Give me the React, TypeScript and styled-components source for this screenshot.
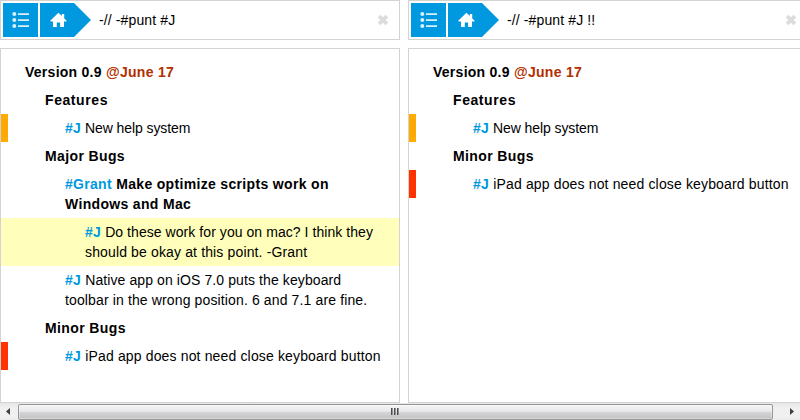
import React from "react";
import styled, { createGlobalStyle } from "styled-components";

const GlobalStyle = createGlobalStyle`
  html, body { margin: 0; padding: 0; overflow: hidden; background: #fff; }
  * { box-sizing: border-box; }
  body { font-family: "Liberation Sans", Arial, sans-serif; font-size: 14px; line-height: 20px; color: #000; }
`;

const Page = styled.div`
  display: flex;
  flex-direction: column;
  width: 800px;
  height: 420px;
  overflow: hidden;
`;

const Panes = styled.main`
  display: flex;
  gap: 8px;
  height: 403px;
  overflow: hidden;
`;

const Pane = styled.section`
  display: flex;
  flex-direction: column;
  flex: none;
  gap: 8px;
  width: 400px;
`;

const SearchBar = styled.header`
  display: flex;
  align-items: center;
  height: 40px;
  padding: 0 10px 0 2px;
  border: 1px solid #d3d3d3;
`;

const MenuButton = styled.button`
  display: flex;
  width: 35px;
  height: 34px;
  margin: 0 2px 0 0;
  padding: 0;
  border: 0;
  background: #0099e0;
`;

const HomeButton = styled(MenuButton)`
  width: 51px;
  margin-right: 8px;
  clip-path: polygon(0 0, 34px 0, 51px 50%, 34px 100%, 0 100%);
`;

const Query = styled.div`
  flex: 1;
  white-space: pre;
  letter-spacing: 0.12px;
`;

const Outline = styled.div`
  height: 355px;
  padding-top: 9px;
  border: 1px solid #d3d3d3;
`;

const Row = styled.div<{ $level: number; $bold?: boolean; $fill?: string; $mark?: string }>`
  padding: 4px 8px 4px ${(p) => 4 + p.$level * 20 - (p.$mark ? 7 : 0)}px;
  border-left: ${(p) => (p.$mark ? `7px solid ${p.$mark}` : "0")};
  background: ${(p) => p.$fill ?? "transparent"};
  font-weight: ${(p) => (p.$bold ? 700 : 400)};
  white-space: nowrap;
`;

const Text = styled.span<{ $track: number }>`
  letter-spacing: ${(p) => p.$track}px;
`;

const Tag = styled.span`
  color: #0099e0;
  font-weight: 700;
  letter-spacing: 0.3px;
`;

const DateTag = styled.span`
  color: #b23000;
  letter-spacing: 0.3px;
`;

const ScrollBar = styled.div`
  display: flex;
  align-items: center;
  width: 800px;
  height: 17px;
  background: linear-gradient(#e6e6e6, #f0f0f0 30%, #f0f0f0 85%, #e8e8e8);
`;

const ScrollEnd = styled.div<{ $width: number }>`
  display: flex;
  width: ${(p) => p.$width}px;
  height: 17px;
`;

const Thumb = styled.div`
  display: flex;
  align-items: center;
  justify-content: center;
  gap: 1px;
  width: 755px;
  height: 16px;
  margin-top: 1px;
  padding: 0 2px 1px 0;
  border: 1px solid #979797;
  border-radius: 2px;
  background: linear-gradient(#f5f5f5 0, #e9e9eb 45%, #d6d6d8 50%, #c0c0c4 100%);
  box-shadow: inset 0 0 0 1px rgba(255, 255, 255, 0.35);
`;

const Grip = styled.span`
  width: 2px;
  height: 7px;
  background: linear-gradient(90deg, #4c4c4c 50%, #929292 50%);
`;

const ListIcon = () => (
  <svg width="35" height="34" fill="#d9f0fb">
    <circle cx="11.3" cy="11" r="2" />
    <circle cx="11.3" cy="17" r="2" />
    <circle cx="11.3" cy="23" r="2" />
    <path d="M15 10.2h11v1.7H15zM15 16.2h11v1.7H15zM15 22.2h11v1.7H15z" />
  </svg>
);

const HomeIcon = () => (
  <svg width="51" height="34" fill="#fff">
    <path d="M18.4 9.8L21.8 13V11h2.4v4.4l2.5 2.4-.5.8H24v4.9q0 .6-.6.6h-3.3v-4.6h-3.3v4.6h-3.2q-.6 0-.6-.6v-4.9h-2.3l-.5-.8z" />
  </svg>
);

const CloseIcon = () => (
  <svg width="12" height="12" stroke="#dcdcdc" strokeWidth="3.8" strokeLinecap="square">
    <path d="M3.4 3.4l5.2 5.2M8.6 3.4L3.4 8.6" />
  </svg>
);

const Search = ({ children }: { children: React.ReactNode }) => (
  <SearchBar>
    <MenuButton aria-label="Documents"><ListIcon /></MenuButton>
    <HomeButton aria-label="Home"><HomeIcon /></HomeButton>
    <Query>{children}</Query>
    <CloseIcon />
  </SearchBar>
);

const Version = () => (
  <Row $level={1} $bold><Text $track={0.26}>Version 0.9 </Text><DateTag>@June 17</DateTag></Row>
);

const Heading = ({ track = 0.38, children }: { track?: number; children: string }) => (
  <Row $level={2} $bold><Text $track={track}>{children}</Text></Row>
);

const HelpItem = () => (
  <Row $level={3} $mark="#ffaa00"><Tag>#J</Tag><Text $track={-0.08}> New help system</Text></Row>
);

const KeyboardItem = () => (
  <Row $level={3} $mark="#ff3300"><Tag>#J</Tag><Text $track={0.15}> iPad app does not need close keyboard button</Text></Row>
);

export default function App() {
  return (
    <>
      <GlobalStyle />
      <Page>
        <Panes>
          <Pane>
            <Search>-// -#punt #J</Search>
            <Outline>
              <Version />
              <Heading track={0.58}>Features</Heading>
              <HelpItem />
              <Heading>Major Bugs</Heading>
              <Row $level={3} $bold>
                <Tag>#Grant</Tag><Text $track={0.33}> Make optimize scripts work on<br />Windows and Mac</Text>
              </Row>
              <Row $level={4} $fill="#ffffbb">
                <Tag>#J</Tag><Text $track={0.06}> Do these work for you on mac? I think they</Text><br />
                <Text $track={0.14}>should be okay at this point. -Grant</Text>
              </Row>
              <Row $level={3}>
                <Tag>#J</Tag><Text $track={0.1}> Native app on iOS 7.0 puts the keyboard</Text><br />
                <Text $track={0.13}>toolbar in the wrong position. 6 and 7.1 are fine.</Text>
              </Row>
              <Heading>Minor Bugs</Heading>
              <KeyboardItem />
            </Outline>
          </Pane>
          <Pane>
            <Search>-// -#punt #J !!</Search>
            <Outline>
              <Version />
              <Heading track={0.58}>Features</Heading>
              <HelpItem />
              <Heading>Minor Bugs</Heading>
              <KeyboardItem />
            </Outline>
          </Pane>
        </Panes>
        <ScrollBar>
          <ScrollEnd $width={18}>
            <svg width="18" height="17"><path d="M10 5v7L6 8.5z" fill="#404040" /></svg>
          </ScrollEnd>
          <Thumb><Grip /><Grip /><Grip /></Thumb>
          <ScrollEnd $width={27}>
            <svg width="27" height="17"><path d="M17 5v7l4-3.5z" fill="#404040" /></svg>
          </ScrollEnd>
        </ScrollBar>
      </Page>
    </>
  );
}
